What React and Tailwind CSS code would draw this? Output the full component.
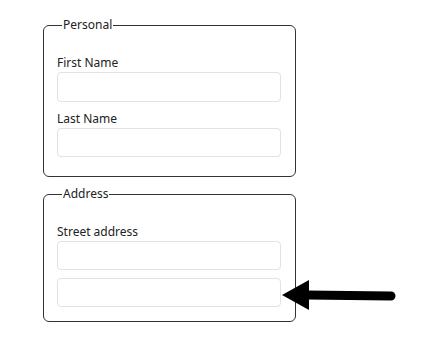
export default function App() {
  return (
    <div className="min-h-[345px] bg-white pl-[43px] pt-[17px] text-[12px] leading-[16px] text-[#222]" style={{ fontFamily: '"Noto Sans", "Segoe UI", sans-serif' }}>
      <div className="relative w-[253px]">
        <fieldset className="rounded-[6px] border border-[#333] pl-[13px] pr-[14px] pt-[22px] pb-[19px]">
          <legend className="ml-[5px] px-px">Personal</legend>
          <label className="block">First Name</label>
          <input className="mt-[1px] block h-[30px] w-full rounded-[4px] border border-[#e1e1e6] outline-none" />
          <label className="mt-[9px] block">Last Name</label>
          <input className="mt-[1px] block h-[29px] w-full rounded-[4px] border border-[#e1e1e6] outline-none" />
        </fieldset>

        <fieldset className="mt-[9px] rounded-[6px] border border-[#333] pl-[13px] pr-[14px] pt-[22px] pb-[14px]">
          <legend className="ml-[5px] px-px">Address</legend>
          <label className="block">Street address</label>
          <input className="mt-[1px] block h-[29px] w-full rounded-[4px] border border-[#e1e1e6] outline-none" />
          <input className="mt-[8px] block h-[29px] w-full rounded-[4px] border border-[#e1e1e6] outline-none" />
        </fieldset>

        <svg className="absolute left-[238px] top-[262px]" width="115" height="32" viewBox="0 0 115 32">
          <path d="M1 16 L28 1 L28 31 Z" fill="#000" />
          <path d="M26 16 L110 17" stroke="#000" strokeWidth="9" strokeLinecap="round" />
        </svg>
      </div>
    </div>
  );
}
